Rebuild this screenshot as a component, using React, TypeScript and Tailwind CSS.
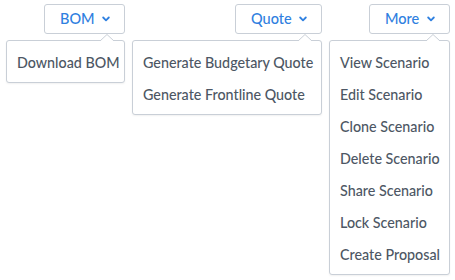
import { ReactNode } from 'react';

const Chevron = () => (
  <svg width="8" height="6" viewBox="0 0 8 6" className="shrink-0">
    <path d="M1.2 1.5 L4 4.3 L6.8 1.5" fill="none" stroke="#2f80e0" strokeWidth="1.8" strokeLinecap="round" strokeLinejoin="round" />
  </svg>
);

const Menu = ({
  label,
  items,
  width,
  btnWidth,
  caretRight,
}: {
  label: ReactNode;
  items: string[];
  width: string;
  btnWidth: string;
  caretRight: string;
}) => (
  <div className={`flex flex-col items-end ${width}`}>
    <button className={`h-[30px] flex items-center justify-between pl-[15px] pr-[14px] border border-[#c9cfd7] rounded-[3px] bg-white text-[14.5px] text-[#2f80e0] font-medium ${btnWidth}`}>
      {label}
      <Chevron />
    </button>
    <div className="relative mt-[6px] w-full border border-[#c9cfd7] rounded-[3px] bg-white pt-[6px] pb-[3px] shadow-[0_1px_2px_rgba(0,0,0,0.06)]">
      {/* caret */}
      <svg width="14" height="7" viewBox="0 0 14 7" className={`absolute -top-[7px] ${caretRight}`}>
        <path d="M0 7 L7 0.5 L14 7" fill="#fff" stroke="#c9cfd7" strokeWidth="1" />
      </svg>
      {items.map((item) => (
        <div key={item} className="h-8 flex items-center px-[10px] text-[14.3px] text-[#4d5764] font-medium whitespace-nowrap">
          {item}
        </div>
      ))}
    </div>
  </div>
);

export default function App() {
  return (
    <div className="w-[455px] h-[280px] bg-white pt-1 pl-[6px] flex items-start gap-[7px]" style={{ fontFamily: 'Lato, "Open Sans", sans-serif' }}>
      <Menu label="BOM" items={['Download BOM']} width="w-[119px]" btnWidth="w-[81px]" caretRight="right-[10px]" />
      <Menu
        label="Quote"
        items={['Generate Budgetary Quote', 'Generate Frontline Quote']}
        width="w-[190px]"
        btnWidth="w-[87px]"
        caretRight="right-[9px]"
      />
      <Menu
        label="More"
        items={['View Scenario', 'Edit Scenario', 'Clone Scenario', 'Delete Scenario', 'Share Scenario', 'Lock Scenario', 'Create Proposal']}
        width="w-[121px]"
        btnWidth="w-[81px]"
        caretRight="right-[9px]"
      />
    </div>
  );
}
